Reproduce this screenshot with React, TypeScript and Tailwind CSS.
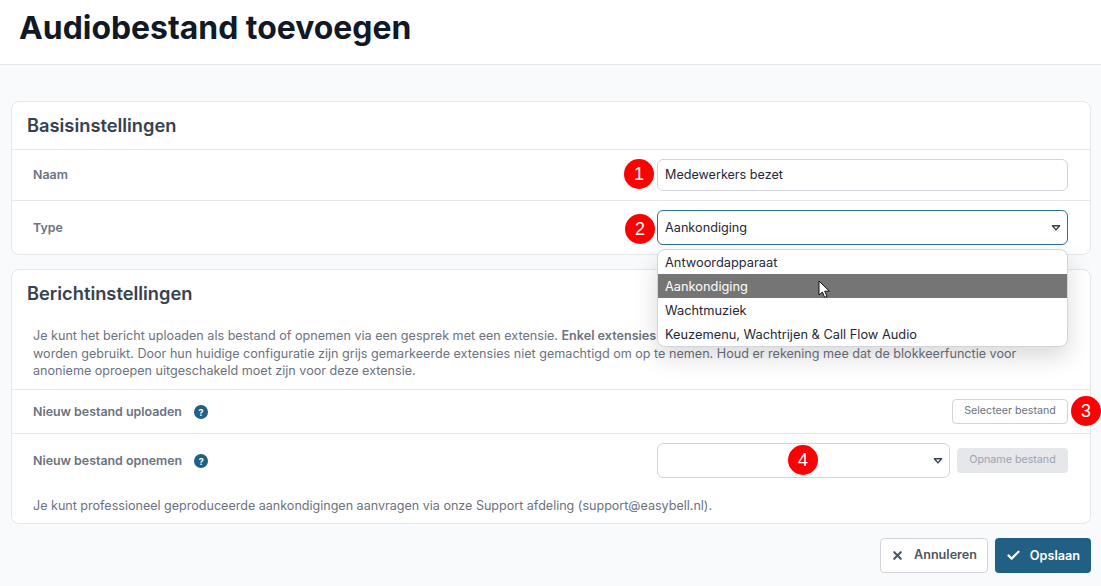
import { Check, X } from "lucide-react";
import type { ReactNode } from "react";

const BLUE = "#215f85";

function Badge({ n, className }: { n: number; className: string }) {
  return (
    <span
      className={`absolute flex h-[30px] w-[30px] items-center justify-center rounded-full bg-[#fe0000] font-['Liberation_Sans',sans-serif] text-[18px] leading-none text-white ${className}`}
    >
      {n}
    </span>
  );
}

function Help() {
  return (
    <span className="flex h-[14px] w-[14px] items-center justify-center rounded-full bg-[#215f85] text-[9px] font-bold leading-none text-white">
      ?
    </span>
  );
}

function Caret() {
  return (
    <svg width="10" height="7" viewBox="0 0 10 7" className="absolute right-[6px] top-1/2 -translate-y-1/2">
      <path d="M1.4 1.2h7.2L5 5.4z" fill="#fff" stroke="#374151" strokeWidth="1.4" strokeLinejoin="round" />
    </svg>
  );
}

function Row({
  label,
  help,
  h,
  labelClass = "",
  children,
}: {
  label: string;
  help?: boolean;
  h: string;
  labelClass?: string;
  children: ReactNode;
}) {
  return (
    <div className={`flex items-center justify-between border-t border-[#e5e7eb] pl-[21px] pr-[22px] ${h}`}>
      <div className={`flex items-center gap-[12px] text-[12.4px] font-semibold text-[#6b7280] ${labelClass}`}>
        {label}
        {help && <Help />}
      </div>
      {children}
    </div>
  );
}

const OPTIONS = ["Antwoordapparaat", "Aankondiging", "Wachtmuziek", "Keuzemenu, Wachtrijen & Call Flow Audio"];

export default function App() {
  return (
    <div className="relative h-[586px] w-[1101px] overflow-hidden bg-[#f9fafb] font-['Inter',sans-serif]">
      <header className="flex h-[65px] items-center border-b border-[#e5e7eb] bg-white pb-[8px] pl-[19px]">
        <h1 className="text-[31.9px] font-bold leading-9 text-[#111827]">Audiobestand toevoegen</h1>
      </header>

      <main className="flex flex-col pl-[11px] pr-[10px] pt-[36px]">
        <section className="h-[154px] rounded-lg border border-[#e5e7eb] bg-white">
          <h2 className="flex h-[47px] items-center pl-[15px] pt-[1px] text-[18.3px] font-semibold text-[#374151]">Basisinstellingen</h2>
          <Row label="Naam" h="h-[51px]">
            <div className="flex h-[32px] w-[411px] items-center rounded-md border border-[#d1d5db] px-[7px] text-[12.6px] text-[#1f2937]">
              Medewerkers bezet
            </div>
          </Row>
          <Row label="Type" h="h-[54px]" labelClass="pt-[2px]">
            <div className="relative flex h-[35px] w-[411px] items-center rounded-md border border-[#2b6f94] px-[7px] text-[12.7px] text-[#1f2937]">
              Aankondiging
              <Caret />
            </div>
          </Row>
        </section>

        <section className="mt-[14px] h-[255px] rounded-lg border border-[#e5e7eb] bg-white">
          <h2 className="flex h-[48px] items-center pl-[15px] text-[18.3px] font-semibold text-[#374151]">Berichtinstellingen</h2>
          <p className="h-[71px] whitespace-nowrap pl-[21px] pt-[9px] text-[12.6px] leading-[17.5px] text-[#6b7280]">
            Je kunt het bericht uploaden als bestand of opnemen via een gesprek met een extensie.{" "}
            <b className="font-semibold">Enkel extensies</b>
            <br />
            worden gebruikt. Door hun huidige configuratie zijn grijs gemarkeerde extensies niet gemachtigd om op te nemen. Houd er rekening mee dat de blokkeerfunctie voor
            <br />
            anonieme oproepen uitgeschakeld moet zijn voor deze extensie.
          </p>
          <Row label="Nieuw bestand uploaden" help h="h-[44px]" labelClass="pt-[2px]">
            <button className="flex h-[25px] w-[116px] items-center justify-center rounded border border-[#d1d5db] bg-white text-[10.7px] text-[#6b7280]">
              Selecteer bestand
            </button>
          </Row>
          <Row label="Nieuw bestand opnemen" help h="h-[54px]" labelClass="pt-[2px]">
            <div className="flex items-center gap-[7px]">
              <div className="relative h-[35px] w-[293px] rounded-md border border-[#d1d5db]">
                <Caret />
              </div>
              <button className="flex h-[25px] w-[111px] items-center justify-center rounded bg-[#e5e7eb] text-[10.7px] text-[#9ca3af]">
                Opname bestand
              </button>
            </div>
          </Row>
          <p className="pl-[21px] pt-[9px] text-[12.56px] leading-5 text-[#6b7280]">
            Je kunt professioneel geproduceerde aankondigingen aanvragen via onze Support afdeling (support@easybell.nl).
          </p>
        </section>

        <div className="mt-[14px] flex justify-end gap-[7px]">
          <button className="flex h-[35px] w-[108px] items-center justify-center gap-[10px] rounded border border-[#d1d5db] bg-white text-[12.6px] font-semibold text-[#4b5563]">
            <X size={13} strokeWidth={4} />
            Annuleren
          </button>
          <button className="flex h-[35px] w-[96px] items-center justify-center gap-[9px] rounded text-[12.7px] font-semibold text-white" style={{ background: BLUE }}>
            <Check size={15} strokeWidth={3.5} />
            Opslaan
          </button>
        </div>
      </main>

      <ul className="absolute left-[657px] top-[249px] w-[411px] overflow-hidden rounded-lg border border-[#d1d5db] bg-white text-[12.8px] text-[#1f2937] shadow-[0_10px_25px_rgba(0,0,0,0.15)]">
        {OPTIONS.map((o, i) => (
          <li key={o} className={`flex h-[24px] items-center px-[7px] pt-[1px] ${i === 1 ? "bg-[#757575] text-white" : ""}`}>
            {o}
          </li>
        ))}
      </ul>

      <svg width="14" height="20" viewBox="0 0 14 20" className="absolute left-[818px] top-[280px]">
        <path d="M1 1v14l3.4-3 2.3 5.4 2.3-1-2.3-5.2h4.6z" fill="#fff" stroke="#111" strokeWidth="1" strokeLinejoin="round" />
      </svg>

      <Badge n={1} className="left-[624px] top-[159px]" />
      <Badge n={2} className="left-[625px] top-[214px]" />
      <Badge n={3} className="left-[1071px] top-[396px]" />
      <Badge n={4} className="left-[788px] top-[445px]" />
    </div>
  );
}
